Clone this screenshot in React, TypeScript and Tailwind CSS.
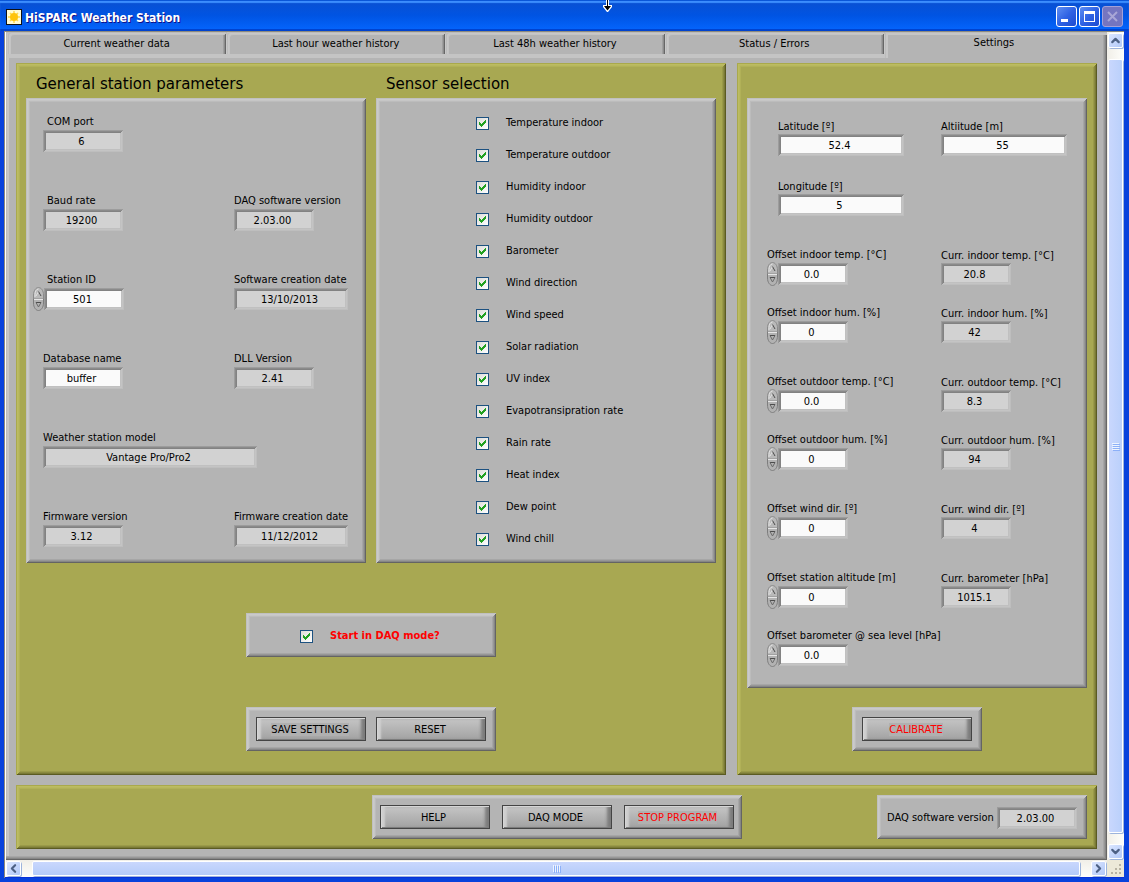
import React, { useId } from "react";
import { ChevronDown, ChevronLeft, ChevronRight, ChevronUp } from "lucide-react";

const tabs = [
  "Current weather data",
  "Last hour weather history",
  "Last 48h weather history",
  "Status / Errors",
];

const sensors = [
  "Temperature indoor",
  "Temperature outdoor",
  "Humidity indoor",
  "Humidity outdoor",
  "Barometer",
  "Wind direction",
  "Wind speed",
  "Solar radiation",
  "UV index",
  "Evapotransipration rate",
  "Rain rate",
  "Heat index",
  "Dew point",
  "Wind chill",
];

// raised and sunken edges, one ring per pixel so the corners are mitred
const raisedGrey =
  "bg-[#b4b4b4] shadow-[inset_1px_1px_#c0c0c0,inset_-1px_-1px_#646464,inset_2px_2px_#cacaca,inset_-2px_-2px_#868686,inset_3px_3px_#c6c6c6,inset_-3px_-3px_#979797,inset_4px_4px_#bcbcbc,inset_-4px_-4px_#a6a6a6]";
const raisedOlive =
  "bg-[#a8a852] shadow-[inset_1px_1px_#a9a94c,inset_-1px_-1px_#5b5b22,inset_2px_2px_#bcbc62,inset_-2px_-2px_#7a7a36,inset_3px_3px_#b8b85e,inset_-3px_-3px_#8a8a40,inset_4px_4px_#b1b158,inset_-4px_-4px_#9a9a49]";
const sunken =
  "shadow-[inset_1px_1px_#9c9c9c,inset_-1px_-1px_#bebebe,inset_2px_2px_#8a8a8a,inset_-2px_-2px_#c4c4c4,inset_3px_3px_#828282,inset_-3px_-3px_#c0c0c0]";

function SpinButtons() {
  return (
    <div className="-my-px flex w-[11px] flex-col">
      <button type="button" aria-label="Increase" className="h-3">
        <svg width="11" height="12" viewBox="0 0 11 12" className="block">
          <path d="M0.5 12V8C0.5 3.5 3 0.5 5.5 0.5S10.5 3.5 10.5 8V12Z" fill="#b9b9b9" stroke="#8a8a8a" />
          <path d="M2 10V7.5C2 4.5 3.5 2 5.5 2" fill="none" stroke="#e6e6e6" />
          <path d="M3 9L5.5 4.5" fill="none" stroke="#e2e2e2" />
          <path d="M5.5 4.5L8 9" fill="none" stroke="#4c4c4c" />
        </svg>
      </button>
      <button type="button" aria-label="Decrease" className="h-3">
        <svg width="11" height="12" viewBox="0 0 11 12" className="block">
          <path d="M0.5 0V4C0.5 8.5 3 11.5 5.5 11.5S10.5 8.5 10.5 4V0Z" fill="#b2b2b2" stroke="#7d7d7d" />
          <path d="M1 0.5H10" stroke="#e6e6e6" />
          <path d="M3 3.5H8" stroke="#4c4c4c" />
          <path d="M3 3.5L5.5 8L8 3.5" fill="none" stroke="#6a6a6a" />
        </svg>
      </button>
    </div>
  );
}

type FieldProps = {
  label: string;
  value: string;
  width?: string;
  editable?: boolean;
  spin?: boolean;
  indent?: string;
  labelStyle?: string;
};

function Field({ label, value, width = "w-20", editable, spin, indent = "", labelStyle = "" }: FieldProps) {
  const id = useId();
  return (
    <div className={indent}>
      <label htmlFor={id} className={`block h-4 leading-4 whitespace-nowrap ${labelStyle}`}>
        {label}
      </label>
      <div className="flex">
        {spin && <SpinButtons />}
        <input
          id={id}
          type="text"
          defaultValue={value}
          readOnly={!editable}
          className={`h-[22px] pr-[3px] text-center outline-none ${width} ${sunken} ${editable ? "bg-[#fafafa]" : "bg-[#d2d2d2]"}`}
        />
      </div>
    </div>
  );
}

function CheckBox({ label, bold }: { label: string; bold?: boolean }) {
  return (
    <label className={`flex h-4 items-center gap-[17px] ${bold ? "font-bold text-[#ff0000]" : ""}`}>
      <span className="grid">
        <input
          type="checkbox"
          defaultChecked
          className="peer col-start-1 row-start-1 h-[13px] w-[13px] appearance-none border border-[#1c5180] bg-linear-to-br from-[#dcdcd7] to-white"
        />
        <svg
          width="13"
          height="13"
          viewBox="0 0 13 13"
          shapeRendering="crispEdges"
          className="pointer-events-none invisible col-start-1 row-start-1 peer-checked:visible"
        >
          <path
            d="M3 5h1v3h-1zM4 6h1v3h-1zM5 7h1v3h-1zM6 6h1v3h-1zM7 5h1v3h-1zM8 4h1v3h-1zM9 3h1v3h-1z"
            fill="#21a121"
          />
        </svg>
      </span>
      {label}
    </label>
  );
}

function PanelButton({ children, red, patch }: { children: string; red?: boolean; patch?: boolean }) {
  return (
    <button
      type="button"
      className={`h-6 w-[110px] border border-[#444] bg-linear-to-b from-[#c6c6c6] to-[#a2a2a2] pt-0.5 pr-0.5 shadow-[inset_1px_1px_#d6d6d6,inset_-1px_-1px_#7c7c7c,inset_4px_0_2px_#cfcfcf,inset_-4px_0_3px_#7c7c7c] ${red ? "text-[#ff0000]" : ""}`}
    >
      <span className={patch ? "bg-[#b0b0b0]" : ""}>{children}</span>
    </button>
  );
}

function ScrollArrow({ label, children }: { label: string; children: React.ReactNode }) {
  return (
    <button
      type="button"
      aria-label={label}
      className="flex h-[15px] w-[15px] shrink-0 items-center justify-center rounded-xs border border-white bg-linear-to-br from-[#dbe6ff] to-[#b1c8f8] text-[#4d6185] shadow-[1px_1px_#9db4dc]"
    >
      {children}
    </button>
  );
}

function TitleBar() {
  const btn =
    "flex h-[21px] w-[21px] items-center justify-center rounded-[3px] border border-white bg-linear-to-br from-[#5f8ef2] via-[#2f62e4] to-[#1c4bd0]";
  return (
    <header className="flex h-[31px] items-center gap-[3px] bg-linear-to-b from-[#0a4fd0] via-[#0054e3] to-[#0566ff] pt-0.5 pr-1.5 pl-1.5 shadow-[inset_0_1px_#0a56d8,inset_0_3px_1px_#3c8dfd,inset_0_-2px_#0043cf]">
      <svg width="16" height="16" viewBox="0 0 16 16">
        <rect x="0.5" y="0.5" width="15" height="15" fill="#fffbd6" stroke="#111" />
        <path d="M8 2v12M2 8h12M4 4l8 8M12 4l-8 8" stroke="#ffd84a" strokeWidth="1.5" />
        <circle cx="8" cy="8" r="4" fill="#ffc40c" />
      </svg>
      <h1 className="flex-1 pt-0.5 text-[12px] font-bold text-white [text-shadow:1px_1px_#0f1089]">
        HiSPARC Weather Station
      </h1>
      <div className="flex gap-0.5">
        <button type="button" aria-label="Minimize" className={btn}>
          <svg width="19" height="19" viewBox="0 0 19 19">
            <path d="M4 12h7v3H4z" fill="#fff" />
          </svg>
        </button>
        <button type="button" aria-label="Maximize" className={btn}>
          <svg width="19" height="19" viewBox="0 0 19 19">
            <path d="M4 4h11v11H4zM5 7v7h9V7z" fill="#fff" fillRule="evenodd" />
          </svg>
        </button>
        <button
          type="button"
          aria-label="Close"
          disabled
          className="flex h-[21px] w-[21px] items-center justify-center rounded-[3px] border border-[#a3a0d8] bg-[#7575c0]"
        >
          <svg width="19" height="19" viewBox="0 0 19 19">
            <path d="M5 5l9 9M14 5l-9 9" stroke="#a9a6d6" strokeWidth="2" />
          </svg>
        </button>
      </div>
    </header>
  );
}

function TabBar() {
  return (
    <div role="tablist" className="grid grid-cols-[219fr_219fr_219fr_219fr_222fr] pl-0.5">
      {tabs.map((tab) => (
        <div key={tab} className="border-b-4 border-[#c4c4c4]">
          <button
            type="button"
            role="tab"
            aria-selected={false}
            className="h-[22px] w-full rounded-t-[3px] pt-[3px] pr-0.5 shadow-[inset_1px_1px_#bcbcbc,inset_-1px_0_#c8c8c8,inset_2px_2px_#c8c8c8,inset_-2px_0_#666,inset_3px_3px_#c4c4c4,inset_-3px_0_#8c8c8c,inset_-4px_0_#a0a0a0]"
          >
            {tab}
          </button>
        </div>
      ))}
      <button
        type="button"
        role="tab"
        aria-selected
        className="h-[26px] pr-1 pb-1 shadow-[inset_1px_1px_#bcbcbc,inset_3px_3px_#c6c6c6]"
      >
        Settings
      </button>
    </div>
  );
}

function StationPanel() {
  return (
    <section className={`grid grid-cols-[191px_1fr] content-start gap-y-[41px] pt-4 pl-[7px] ${raisedGrey}`}>
      <Field label="COM port" value="6" indent="col-span-2 pl-[10px]" labelStyle="pl-1" />
      <Field label="Baud rate" value="19200" indent="pl-[10px]" labelStyle="pl-1" />
      <Field label="DAQ software version" value="2.03.00" indent="pl-[10px]" />
      <Field label="Station ID" value="501" editable spin labelStyle="pl-3.5" />
      <Field label="Software creation date" value="13/10/2013" width="w-[114px]" indent="pl-[10px]" />
      <Field label="Database name" value="buffer" editable indent="pl-[10px]" />
      <Field label="DLL Version" value="2.41" indent="pl-[10px]" />
      <Field label="Weather station model" value="Vantage Pro/Pro2" width="w-[214px]" indent="col-span-2 pl-[10px]" />
      <Field label="Firmware version" value="3.12" indent="pl-[10px]" />
      <Field label="Firmware creation date" value="11/12/2012" width="w-[114px]" indent="pl-[10px]" />
    </section>
  );
}

function CalibrationPanel() {
  const row = "grid grid-cols-[174px_1fr]";
  return (
    <section className={`flex h-[590px] flex-col gap-[31px] pt-5 pl-5 ${raisedGrey}`}>
      <div className={`${row} gap-y-[22px]`}>
        <Field label="Latitude [º]" value="52.4" width="w-[126px]" editable indent="pl-[11px]" labelStyle="pt-px" />
        <Field label="Altiitude [m]" value="55" width="w-[126px]" editable labelStyle="pt-px" />
        <Field label="Longitude [º]" value="5" width="w-[126px]" editable indent="pl-[11px]" labelStyle="pt-px" />
      </div>
      <div className={`${row} gap-y-5`}>
        <Field label="Offset indoor temp. [°C]" value="0.0" width="w-[70px]" editable spin />
        <Field label="Curr. indoor temp. [°C]" value="20.8" width="w-[70px]" labelStyle="pt-px" />
        <Field label="Offset indoor hum. [%]" value="0" width="w-[70px]" editable spin />
        <Field label="Curr. indoor hum. [%]" value="42" width="w-[70px]" labelStyle="pt-px" />
      </div>
      <div className={`${row} gap-y-5`}>
        <Field label="Offset outdoor temp. [°C]" value="0.0" width="w-[70px]" editable spin />
        <Field label="Curr. outdoor temp. [°C]" value="8.3" width="w-[70px]" labelStyle="pt-px" />
        <Field label="Offset outdoor hum. [%]" value="0" width="w-[70px]" editable spin />
        <Field label="Curr. outdoor hum. [%]" value="94" width="w-[70px]" labelStyle="pt-px" />
      </div>
      <div className={row}>
        <Field label="Offset wind dir. [º]" value="0" width="w-[70px]" editable spin />
        <Field label="Curr. wind dir. [º]" value="4" width="w-[70px]" labelStyle="pt-px" />
      </div>
      <div className={`${row} gap-y-5`}>
        <Field label="Offset station altitude [m]" value="0" width="w-[70px]" editable spin />
        <Field label="Curr. barometer [hPa]" value="1015.1" width="w-[70px]" labelStyle="pt-px" />
        <Field label="Offset barometer @ sea level [hPa]" value="0.0" width="w-[70px]" editable spin />
      </div>
    </section>
  );
}

function VerticalScroll() {
  return (
    <div className="flex w-[17px] flex-col items-center gap-[11px] bg-linear-to-r from-[#f1efe8] to-[#fefefb] py-px">
      <ScrollArrow label="Scroll up">
        <ChevronUp size={13} strokeWidth={4} className="shrink-0" />
      </ScrollArrow>
      <div className="flex w-[15px] flex-1 flex-col items-center justify-center gap-px rounded-xs border border-white bg-linear-to-r from-[#c9d7fd] to-[#bad0fb] shadow-[1px_1px_#9db4dc]">
        {[0, 1, 2, 3].map((n) => (
          <span key={n} className="h-px w-[7px] bg-[#eef4fe] shadow-[1px_1px_#8cb0f8]" />
        ))}
      </div>
      <ScrollArrow label="Scroll down">
        <ChevronDown size={13} strokeWidth={4} className="shrink-0" />
      </ScrollArrow>
    </div>
  );
}

function HorizontalScroll() {
  return (
    <div className="flex h-[17px] items-center bg-linear-to-b from-[#f1efe8] to-[#fefefb]">
      <div className="flex flex-1 items-center gap-[11px] pr-px">
        <ScrollArrow label="Scroll left">
          <ChevronLeft size={13} strokeWidth={4} className="shrink-0" />
        </ScrollArrow>
        <div className="flex h-[15px] flex-1 items-center justify-center gap-px rounded-xs border border-white bg-linear-to-b from-[#c9d7fd] to-[#b4cbf9] shadow-[1px_1px_#9db4dc]">
          {[0, 1, 2, 3].map((n) => (
            <span key={n} className="h-[7px] w-px bg-[#eef4fe] shadow-[1px_1px_#8cb0f8]" />
          ))}
        </div>
        <ScrollArrow label="Scroll right">
          <ChevronRight size={13} strokeWidth={4} className="shrink-0" />
        </ScrollArrow>
      </div>
      <div className="flex h-full w-[17px] items-end justify-end bg-[#ece9d8] p-0.5">
        <svg width="12" height="12" viewBox="0 0 12 12" shapeRendering="crispEdges">
          <path d="M9 1h2v2H9zM5 5h2v2H5zM9 5h2v2H9zM1 9h2v2H1zM5 9h2v2H5zM9 9h2v2H9z" fill="#b8b4a3" />
        </svg>
      </div>
    </div>
  );
}

function Pointer() {
  return (
    <svg width="11" height="12" viewBox="0 0 11 12" className="pointer-events-none absolute top-0 left-[602px]">
      <path d="M4 0v5H1v2l4 5h1l4-5V5H7V0z" fill="#fff" />
      <path d="M5 0v6H2l3.5 4.5L9 6H6V0z" fill="#000" />
    </svg>
  );
}

export default function App() {
  const heading = "flex h-[35px] items-center pt-2 pl-2.5 font-['DejaVu_Sans',sans-serif] text-[15px]";
  return (
    <div className="relative flex min-h-screen flex-col bg-[#0831d9] font-['DejaVu_Sans_Condensed','DejaVu_Sans',sans-serif] text-[11px] text-black">
      <TitleBar />
      <div className="flex flex-1 flex-col border-r-[5px] border-b-4 border-l-4 border-[#0842dc] shadow-[inset_1px_1px_#8d8a7d]">
        <div className="mt-px mb-px ml-px flex flex-1 flex-col bg-white pl-px">
          <div className="flex flex-1">
            <main className="flex-1 bg-[#b4b4b4] shadow-[inset_-1px_-1px_#666,inset_-2px_-2px_#868686,inset_-3px_-3px_#979797,inset_-4px_-4px_#a6a6a6,inset_1px_1px_#bcbcbc,inset_3px_3px_#c6c6c6]">
              <TabBar />
              <div className="flex flex-col gap-2.5 px-2.5 pt-[5px] pb-2.5">
                <div className="grid grid-cols-[710fr_360fr] gap-[11px]">
                  <div className={`px-2.5 pb-6 ${raisedOlive}`}>
                    <div className="grid grid-cols-2 gap-x-2.5">
                      <h2 className={heading}>General station parameters</h2>
                      <h2 className={heading}>Sensor selection</h2>
                      <StationPanel />
                      <section className={`flex h-[465px] flex-col gap-4 pt-[17px] pl-[100px] ${raisedGrey}`}>
                        {sensors.map((name) => (
                          <CheckBox key={name} label={name} />
                        ))}
                      </section>
                    </div>
                    <div className={`mx-auto mt-[50px] flex h-11 w-[250px] items-center pt-0.5 pl-[54px] ${raisedGrey}`}>
                      <CheckBox label="Start in DAQ mode?" bold />
                    </div>
                    <div className={`mx-auto mt-[50px] flex h-11 w-[250px] gap-2.5 p-2.5 ${raisedGrey}`}>
                      <PanelButton patch>SAVE SETTINGS</PanelButton>
                      <PanelButton>RESET</PanelButton>
                    </div>
                  </div>
                  <div className={`px-2.5 pt-[35px] pb-6 ${raisedOlive}`}>
                    <CalibrationPanel />
                    <div className={`mx-auto mt-[19px] flex h-11 w-[130px] p-2.5 ${raisedGrey}`}>
                      <PanelButton red patch>
                        CALIBRATE
                      </PanelButton>
                    </div>
                  </div>
                </div>
                <footer className={`grid h-16 grid-cols-[1fr_auto_1fr] items-center px-2.5 ${raisedOlive}`}>
                  <div className={`col-start-2 flex h-11 w-[370px] items-center justify-between px-2 ${raisedGrey}`}>
                    <PanelButton>HELP</PanelButton>
                    <PanelButton>DAQ MODE</PanelButton>
                    <PanelButton red patch>
                      STOP PROGRAM
                    </PanelButton>
                  </div>
                  <div
                    className={`flex h-11 w-[210px] items-center justify-between justify-self-end px-2.5 pt-0.5 ${raisedGrey}`}
                  >
                    <label htmlFor="daq-version">DAQ software version</label>
                    <input
                      id="daq-version"
                      readOnly
                      defaultValue="2.03.00"
                      className={`h-[22px] w-20 bg-[#d2d2d2] pr-[3px] text-center outline-none ${sunken}`}
                    />
                  </div>
                </footer>
              </div>
            </main>
            <VerticalScroll />
          </div>
          <HorizontalScroll />
        </div>
      </div>
      <Pointer />
    </div>
  );
}
